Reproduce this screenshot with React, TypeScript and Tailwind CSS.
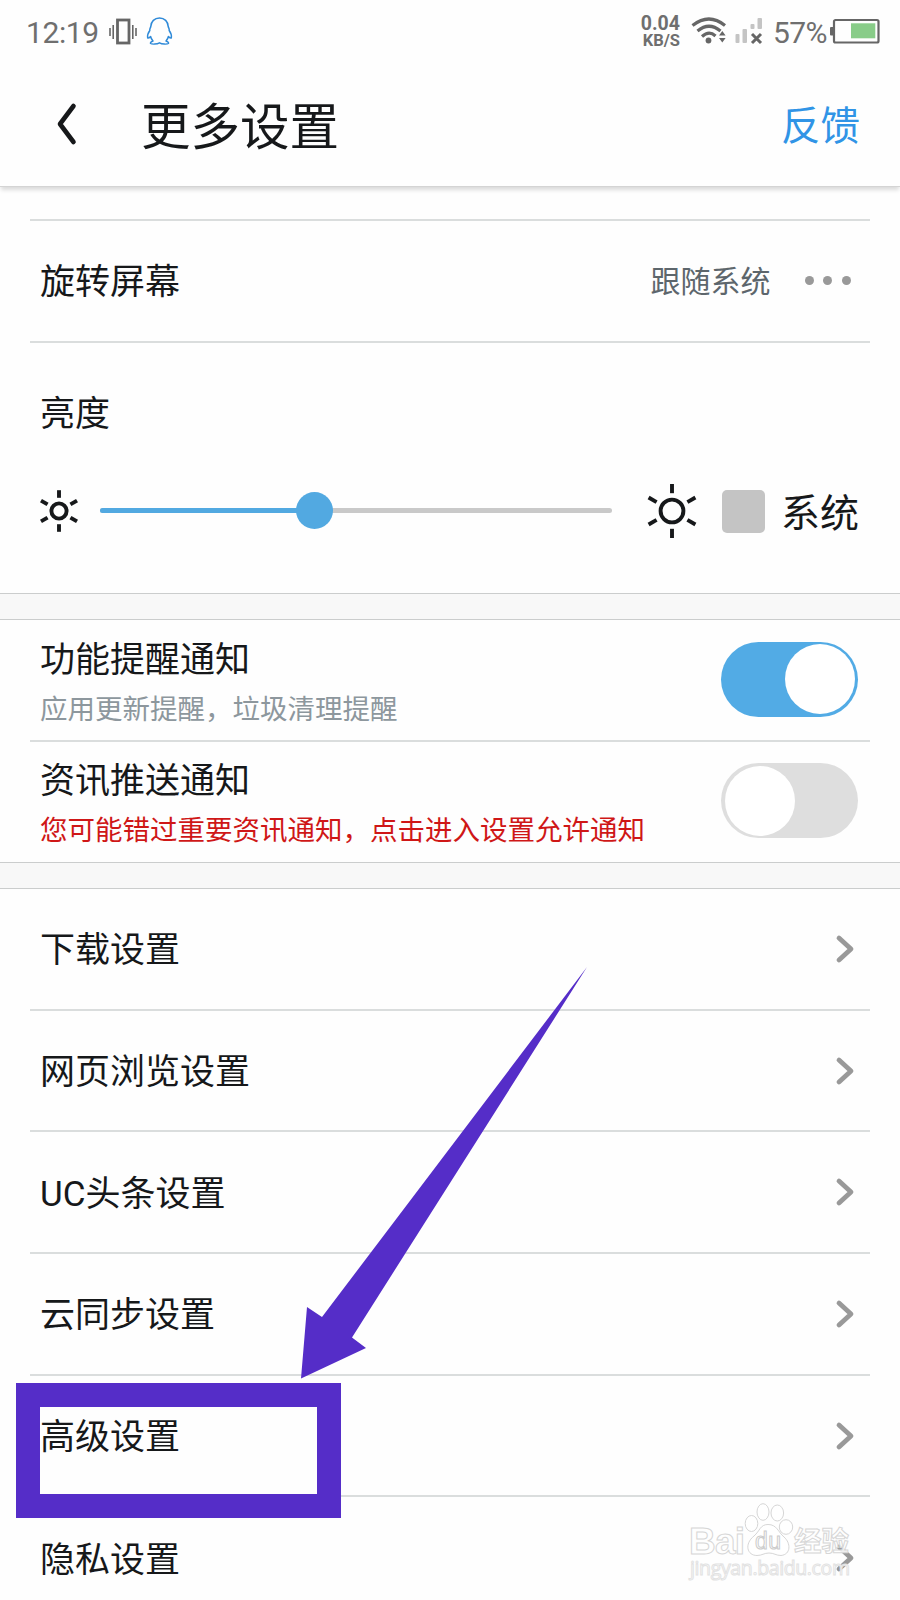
import { useState } from "react";

interface SettingRowProps {
  label: string;
  last?: boolean;
}

interface ToggleRowProps {
  title: string;
  description: string;
  descriptionClass: string;
  initial: boolean;
}

const links = ["下载设置", "网页浏览设置", "UC头条设置", "云同步设置", "高级设置", "隐私设置"];

function StatusBar() {
  return (
    <div className="flex h-[62px] shrink-0 items-center pl-[26px] pr-[20px] text-[#6f6f6f]">
      <span className="w-[83px] pt-[3px] text-[30px] leading-none tracking-[-0.4px]">12:19</span>
      <svg className="h-[28px] w-[28px]" viewBox="0 0 28 28" fill="none" stroke="#666">
        <rect x="8.500" y="3" width="11.500" height="23" strokeWidth="2.800" />
        <path d="M1 11v8M4.200 8v14M23.800 8v14M27 11v8" strokeWidth="1.600" />
      </svg>
      <svg
        className="ml-[9px] h-[30px] w-[27px]"
        viewBox="0 0 27 30"
        fill="none"
        stroke="#2f8ad8"
        strokeWidth="1.500"
        strokeLinejoin="round"
      >
        <path d="M13.500 2C8.500 2 5 5.500 4.800 10.500C4.500 12 3.500 12.500 3.800 14.500C2 17 1.200 19.500 1.700 22C2.400 22.500 3.600 21.500 4.600 20.500C5 22.500 6 24 7 25C5 25.700 4 26.700 4.600 27.500C6 28.500 11 28.300 13.500 26.800C16 28.300 21 28.500 22.400 27.500C23 26.700 22 25.700 20 25C21 24 22 22.500 22.400 20.500C23.400 21.500 24.600 22.500 25.300 22C25.800 19.500 25 17 23.200 14.500C23.500 12.500 22.500 12 22.200 10.500C22 5.500 18.500 2 13.500 2Z" />
      </svg>

      <div className="ml-auto pt-px text-right font-bold">
        <div className="text-[19.5px] leading-[18px]">0.04</div>
        <div className="text-[16.5px] leading-[16px]">KB/S</div>
      </div>
      <svg className="ml-[11px] h-[30px] w-[36px]" viewBox="0 0 36 30" fill="none" stroke="#666">
        <path d="M1.500 9.500Q18 -3.500 34 9.500" strokeWidth="3.200" />
        <path d="M6.500 15Q18 5.500 29.500 15" strokeWidth="3.200" />
        <path d="M11 20.500Q18 14 24.500 20" strokeWidth="3.200" />
        <circle cx="17.500" cy="24.500" r="2.900" fill="#666" stroke="none" />
        <path d="M28 19.500l3.300-4.500 3.300 4.500zM28 22h6.600l-3.300 4.500z" fill="#666" stroke="none" />
      </svg>
      <svg className="ml-[8px] h-[30px] w-[30px]" viewBox="0 0 30 30">
        <rect x="0.500" y="18" width="4" height="9" rx="1" fill="#c4c4c4" />
        <rect x="7.500" y="13" width="4.500" height="14" rx="1" fill="#c4c4c4" />
        <rect x="15.500" y="8" width="4" height="5" rx="1" fill="#c4c4c4" />
        <rect x="22.500" y="2" width="4.500" height="11" rx="1" fill="#c4c4c4" />
        <path d="M17 18l9 9M26 18l-9 9" stroke="#666" strokeWidth="3" />
      </svg>
      <span className="ml-[8px] w-[57px] pt-[3px] text-[30px] leading-none tracking-[-0.6px]">57%</span>
      <svg className="h-[26px] w-[50px]" viewBox="0 0 50 26">
        <rect x="0" y="9" width="4" height="8.500" rx="1" fill="#666" />
        <rect x="4" y="2" width="44.500" height="22.500" rx="1.500" fill="none" stroke="#666" strokeWidth="2.200" />
        <rect x="21" y="5.300" width="24.300" height="15" fill="#88cc88" />
      </svg>
    </div>
  );
}

function Header() {
  return (
    <header className="flex h-[125px] shrink-0 items-center border-b border-[#d4d4d4] pl-[55px] pr-[40px] shadow-[0_4px_4px_-1px_rgba(0,0,0,0.14)]">
      <svg className="h-[44px] w-[24px]" viewBox="0 0 24 44" fill="none">
        <path
          d="M18.500 4L5 22L18.500 40"
          stroke="#16181a"
          strokeWidth="4.600"
          strokeLinecap="round"
          strokeLinejoin="round"
        />
      </svg>
      <h1 className="ml-[62px] pt-[9px] text-[49.5px] leading-none text-[#16181a]">更多设置</h1>
      <button className="ml-auto pt-[6px] text-[39.5px] leading-none text-[#3094e6]">反馈</button>
    </header>
  );
}

function Sun({ className, radius, inner, outer }: { className: string; radius: number; inner: number; outer: number }) {
  return (
    <svg className={className} viewBox="-28 -28 56 56" fill="none" stroke="#16181a" strokeWidth="3.900">
      <circle r={radius} />
      {[0, 60, 120, 180, 240, 300].map((angle) => (
        <path key={angle} d={`M0 ${-inner}V${-outer}`} transform={`rotate(${angle})`} />
      ))}
    </svg>
  );
}

function Brightness() {
  const [level] = useState(42);

  return (
    <section className="h-[250px] shrink-0 px-[40px] pt-[53px]">
      <div className="text-[35px] leading-[38px] text-[#16181a]">亮度</div>
      <div className="mt-[49px] flex h-[56px] items-center">
        <div className="flex w-[60px]">
          <Sun className="-ml-[9px] h-[56px] w-[56px] shrink-0" radius={7.6} inner={13.2} outer={20.8} />
        </div>
        <div className="relative mb-px h-[5px] w-[512px] rounded-full bg-[#c9c9c9]">
          <div className="h-full rounded-full bg-[#52a9e1]" style={{ width: `${level}%` }} />
          <div
            className="absolute -top-[16px] -ml-[19px] h-[37px] w-[37px] rounded-full bg-[#52a9e1]"
            style={{ left: `${level}%` }}
          />
        </div>
        <Sun className="ml-[32px] h-[56px] w-[56px]" radius={11.4} inner={17.8} outer={27} />
        <div className="ml-[22px] h-[43px] w-[43px] rounded-[5px] bg-[#c4c4c4]" />
        <span className="ml-[16px] pt-[6px] text-[39px] leading-none text-[#16181a]">系统</span>
      </div>
    </section>
  );
}

function ToggleRow({ title, description, descriptionClass, initial }: ToggleRowProps) {
  const [on, setOn] = useState(initial);

  return (
    <div className="flex h-full items-center pb-[2px] pl-[10px] pr-[12px]">
      <div className="pt-[10px]">
        <div className="text-[35px] leading-[46px] text-[#16181a]">{title}</div>
        <div className={`mt-[5px] text-[27.5px] leading-[42px] ${descriptionClass}`}>{description}</div>
      </div>
      <button
        onClick={() => setOn(!on)}
        className={`ml-auto flex h-[75px] w-[137px] items-center rounded-full px-[3.5px] ${
          on ? "justify-end bg-[#52abe5]" : "bg-[#dedede]"
        }`}
      >
        <span className="h-[70px] w-[70px] rounded-full bg-white" />
      </button>
    </div>
  );
}

function SettingRow({ label, last }: SettingRowProps) {
  return (
    <div
      className={`mx-[30px] flex h-[121.7px] shrink-0 items-center pl-[10px] pr-[15px] ${
        last ? "" : "border-b-2 border-[#dadddd]"
      }`}
    >
      <span className="pt-[4px] text-[35px] leading-none text-[#16181a]">{label}</span>
      <svg className="ml-auto h-[30px] w-[20px]" viewBox="0 0 20 30" fill="none">
        <path
          d="M4 4L16 15L4 26"
          stroke="#999"
          strokeWidth="4.800"
          strokeLinecap="round"
          strokeLinejoin="round"
        />
      </svg>
    </div>
  );
}

function Gap() {
  return <div className="h-[27px] shrink-0 border-y-[1.5px] border-[#cbcdcd] bg-[#f8f8f8]" />;
}

function Watermark() {
  return (
    <svg
      className="absolute left-[685px] top-[1498px] h-[90px] w-[175px]"
      viewBox="0 0 175 90"
      fill="#fff"
      fillOpacity="0.85"
      stroke="#d6d6d6"
      strokeWidth="1"
    >
      <text x="4" y="56" fontFamily="Liberation Sans" fontWeight="bold" fontSize="37" textLength="56">
        Bai
      </text>
      <ellipse cx="66.500" cy="25.500" rx="6.300" ry="8" />
      <ellipse cx="78" cy="14" rx="6" ry="8.300" />
      <ellipse cx="92.300" cy="15" rx="6.300" ry="8" />
      <ellipse cx="101" cy="29" rx="6.700" ry="7.300" />
      <path d="M83 26.500C75 26.500 75 33 69 38C59 46 62 57.500 72 57.500C77 57.500 79 55 84 55C89 55 91 57.500 96 57.500C106 56.500 106 45 99 39C93 34 92 26.500 83 26.500Z" />
      <text x="70" y="51" fontFamily="Liberation Sans" fontSize="23" textLength="26" stroke="#ccc">
        du
      </text>
      <text x="109" y="53" fontFamily="Noto Sans CJK SC" fontWeight="bold" fontSize="27.500">
        经验
      </text>
      <text x="5" y="77" fontFamily="Open Sans" fontSize="19.500" textLength="160" stroke="#e2e2e2">
        jingyan.baidu.com
      </text>
    </svg>
  );
}

export default function App() {
  return (
    <div className="relative flex h-[1600px] w-[900px] flex-col overflow-hidden bg-[#fefefe] font-[Roboto,'Noto_Sans_CJK_SC',sans-serif] font-normal">
      <StatusBar />
      <Header />

      <div className="mx-[30px] mt-[32px] flex h-[124px] shrink-0 items-center border-y-2 border-[#dadddd] pl-[10px] pr-[19.5px]">
        <span className="pt-[3px] text-[35px] leading-none text-[#16181a]">旋转屏幕</span>
        <span className="ml-auto pt-[2px] text-[30px] leading-none text-[#5d666c]">跟随系统</span>
        <div className="ml-[34px] flex gap-[9.5px] pb-[2px]">
          <i className="h-[9px] w-[9px] rounded-full bg-[#999]" />
          <i className="h-[9px] w-[9px] rounded-full bg-[#999]" />
          <i className="h-[9px] w-[9px] rounded-full bg-[#999]" />
        </div>
      </div>
      <Brightness />

      <Gap />
      <div className="mx-[30px] h-[122px] shrink-0 border-b-2 border-[#dadddd]">
        <ToggleRow
          title="功能提醒通知"
          description="应用更新提醒，垃圾清理提醒"
          descriptionClass="text-[#8d979d]"
          initial
        />
      </div>
      <div className="mx-[30px] h-[120px] shrink-0 pb-px">
        <ToggleRow
          title="资讯推送通知"
          description="您可能错过重要资讯通知，点击进入设置允许通知"
          descriptionClass="text-[#cf1717]"
          initial={false}
        />
      </div>
      <Gap />

      {links.map((label, i) => (
        <SettingRow key={label} label={label} last={i === links.length - 1} />
      ))}

      <div className="absolute left-[16px] top-[1383px] h-[135px] w-[325px] border-[24px] border-[#552dc8]" />
      <svg className="absolute left-[290px] top-[960px] h-[430px] w-[310px]" viewBox="290 960 310 430">
        <path
          d="M587 967L352 1337.500L366 1348L301 1378.500L307 1307L322 1317Z"
          fill="#552dc8"
        />
      </svg>
      <Watermark />
    </div>
  );
}
